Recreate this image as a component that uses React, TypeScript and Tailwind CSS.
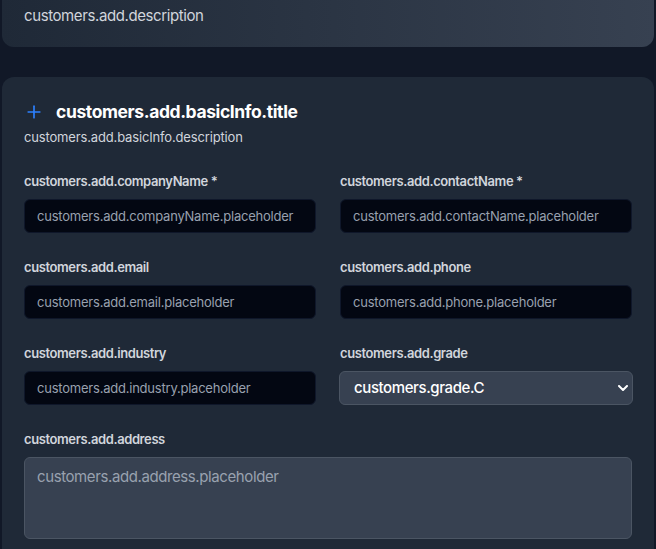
import { Plus } from "lucide-react";

const fields = [
  { label: "customers.add.companyName *", placeholder: "customers.add.companyName.placeholder" },
  { label: "customers.add.contactName *", placeholder: "customers.add.contactName.placeholder" },
  { label: "customers.add.email", placeholder: "customers.add.email.placeholder" },
  { label: "customers.add.phone", placeholder: "customers.add.phone.placeholder" },
  { label: "customers.add.industry", placeholder: "customers.add.industry.placeholder" },
];

export default function App() {
  return (
    <div
      className="min-h-[549px] bg-[#111827] px-[2px] overflow-hidden tracking-tight"
      style={{ fontFamily: "Inter, 'Noto Sans', sans-serif" }}
    >
      {/* page header */}
      <div className="mt-[-20px] rounded-xl bg-gradient-to-r from-[#1f2937] to-[#374151] px-[22px] pt-6 pb-[19px]">
        <p className="text-[15px] leading-6 text-gray-300">customers.add.description</p>
      </div>

      {/* basic info card */}
      <div className="mt-[30px] rounded-xl bg-[#1f2937] px-[22px] pt-[21px] pb-10">
        <div className="flex items-center gap-3">
          <Plus className="w-5 h-5 text-blue-500" strokeWidth={2} />
          <h2 className="text-[17.5px] leading-7 font-bold text-white">customers.add.basicInfo.title</h2>
        </div>
        <p className="mt-px text-[13px] leading-5 tracking-[-0.012em] text-gray-300">customers.add.basicInfo.description</p>

        <div className="mt-6 grid grid-cols-2 gap-x-6 gap-y-6">
          {fields.map((f) => (
            <div key={f.label}>
              <label className="block mb-2 text-[13px] leading-5 font-semibold text-gray-300">{f.label}</label>
              <input
                className="w-full h-[34px] rounded-md bg-[#030712] border border-[#0f172a] px-3 text-[13px] tracking-[-0.017em] text-gray-300 placeholder:text-gray-400 outline-none"
                placeholder={f.placeholder}
              />
            </div>
          ))}
          <div>
            <label className="block mb-2 text-[13px] leading-5 font-semibold text-gray-300">customers.add.grade</label>
            <div className="relative">
              <select
                defaultValue="C"
                className="appearance-none w-[294px] -ml-px h-[34px] rounded-md bg-[#374151] border border-[#4b5563] pl-[14px] pr-8 text-[15px] font-medium text-white outline-none"
              >
                <option value="C">customers.grade.C</option>
              </select>
              <svg
                className="absolute right-[4px] top-[14px] w-[10px] h-[6px] pointer-events-none"
                viewBox="0 0 10 6"
                fill="none"
              >
                <path d="M1 1l4 4 4-4" stroke="white" strokeWidth="2" strokeLinecap="round" strokeLinejoin="round" />
              </svg>
            </div>
          </div>
          <div className="col-span-2">
            <label className="block mb-2 text-[13px] leading-5 font-semibold text-gray-300">customers.add.address</label>
            <textarea
              className="block w-full h-[82px] resize-none rounded-md bg-[#374151] border border-[#4b5563] px-3 py-2 text-[15px] text-gray-300 placeholder:text-gray-400 outline-none"
              placeholder="customers.add.address.placeholder"
            />
          </div>
        </div>
      </div>
    </div>
  );
}
